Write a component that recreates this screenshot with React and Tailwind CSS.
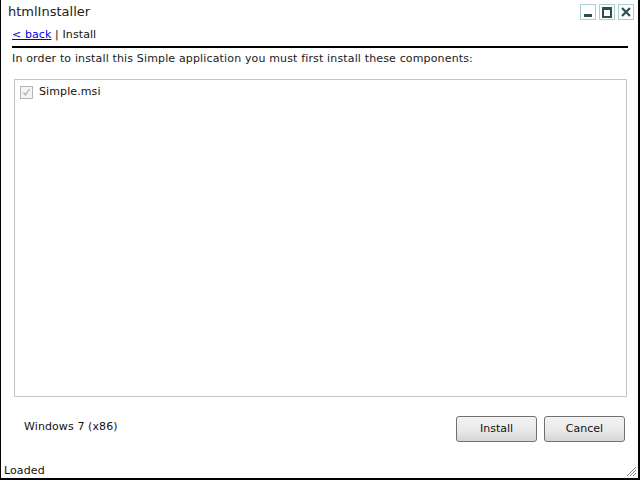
import React from "react";

const WinButton = ({ children }) => (
  <div className="w-[16px] h-[16px] border border-[#a9cfd0] flex items-center justify-center">
    {children}
  </div>
);

const App = () => {
  return (
    <div
      className="w-[640px] h-[480px] bg-white border-l border-r-2 border-b-2 border-black relative flex flex-col text-[#1a1a1a]"
      style={{ fontFamily: '"DejaVu Sans", Verdana, sans-serif' }}
    >
      {/* Title bar */}
      <div className="h-[26px] flex items-start justify-between pl-[7px] pr-[4px] pt-[3px]">
        <div className="text-[13px] leading-[18px] text-[#222]">htmlInstaller</div>
        <div className="flex gap-[3px] pt-[1px]">
          <WinButton>
            <div className="w-[8px] h-[3px] bg-[#2f4f4f] mt-[7px]" />
          </WinButton>
          <WinButton>
            <div className="w-[10px] h-[11px] border-2 border-t-[3px] border-[#2f4f4f]" />
          </WinButton>
          <WinButton>
            <svg width="10" height="10" viewBox="0 0 10 10">
              <path d="M1 1 L9 9 M9 1 L1 9" stroke="#2f4f4f" strokeWidth="2.2" />
            </svg>
          </WinButton>
        </div>
      </div>

      {/* Breadcrumb */}
      <div className="pl-[11px] h-[20px] text-[11px] leading-[18px] tracking-[0.1px]">
        <a href="#" className="text-[#0000ee] underline">&lt; back</a>
        <span className="text-[#111]"> | Install</span>
      </div>
      <div className="ml-[11px] mr-[10px] h-[2px] bg-black" />

      {/* Instruction */}
      <div className="pl-[11px] pt-[3px] h-[31px] text-[11px] leading-[16px] tracking-[0.15px]">
        In order to install this Simple application you must first install these components:
      </div>

      {/* Component list */}
      <div className="ml-[13px] mr-[11px] h-[318px] border border-[#c4c4c4] px-[5px] pt-[4px]">
        <label className="flex items-center gap-[6px] text-[11px] tracking-[0.1px]">
          <span className="w-[13px] h-[13px] border border-[#b4b4b4] bg-[#f4f4f4] flex items-center justify-center">
            <svg width="9" height="9" viewBox="0 0 9 9">
              <path d="M1.5 4.5 L3.5 7 L7.5 1" stroke="#b0b0b0" strokeWidth="1.3" fill="none" />
            </svg>
          </span>
          <span className="text-[#111]">Simple.msi</span>
        </label>
      </div>

      {/* Bottom row */}
      <div className="flex items-center justify-between pl-[23px] pr-[13px] pt-[19px]">
        <div className="text-[11px] text-[#111] -mt-[3px] tracking-[0.1px]">Windows 7 (x86)</div>
        <div className="flex gap-[7px]">
          <button className="w-[81px] h-[26px] rounded-[3px] border border-[#707070] bg-gradient-to-b from-[#f2f2f2] via-[#ebebeb] to-[#d6d6d6] text-[11px] text-[#111]">
            Install
          </button>
          <button className="w-[81px] h-[26px] rounded-[3px] border border-[#707070] bg-gradient-to-b from-[#f2f2f2] via-[#ebebeb] to-[#d6d6d6] text-[11px] text-[#111]">
            Cancel
          </button>
        </div>
      </div>

      {/* Status bar */}
      <div className="mt-auto pl-[3px] text-[11px] leading-[14px] text-[#111] tracking-[0.1px]">Loaded</div>

      {/* Resize grip */}
      <svg className="absolute right-[1px] bottom-[1px]" width="12" height="12" viewBox="0 0 12 12">
        <path d="M11 2 L2 11 M11 5 L5 11 M11 8 L8 11" stroke="#888" strokeWidth="1" />
      </svg>
    </div>
  );
};

export default App;
